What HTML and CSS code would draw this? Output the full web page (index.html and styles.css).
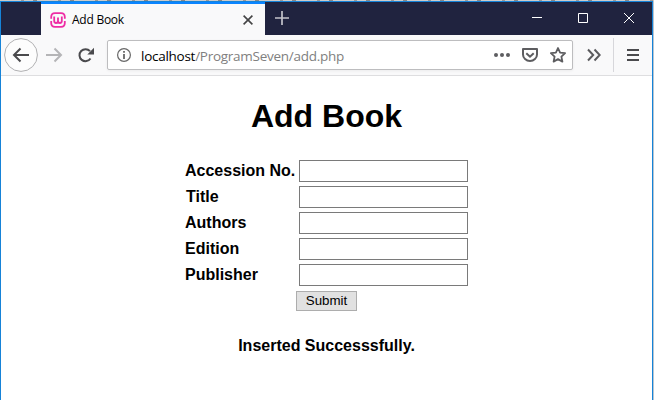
FILE: index.html
```html
<!DOCTYPE html>
<html lang="en">
<head>
<meta charset="utf-8">
<title>Add Book</title>
<link rel="stylesheet" href="styles.css">
</head>
<body>
<div class="desktop-edge"></div>
<div class="window">
  <header class="titlebar">
    <div class="tab">
      <svg class="favicon" width="16" height="16" viewBox="0 0 16 16" fill="none" stroke="#ee2ca4"><path stroke-width="1.8" d="M1.2 6.8V5Q1.2 1.2 5 1.2h6Q14.8 1.2 14.8 5v1.8M1.2 9V11Q1.2 14.8 5 14.8h6Q14.8 14.8 14.8 11V9"/><path stroke-width="1.8" d="M4.200 4.500v4.600Q4.200 11 6 11q2 0 2-2V5.500v3.500q0 2 2 2 1.800 0 1.800-1.900V4.500"/></svg>
      <span class="tab-title">Add Book</span>
      <svg class="tab-close" width="10" height="10" viewBox="0 0 10 10" fill="none" stroke="#444" stroke-width="1.6"><path d="M.6.6l8.800 8.800M9.400.6L.6 9.400"/></svg>
    </div>
    <svg class="new-tab" width="14" height="14" viewBox="0 0 14 14" fill="none" stroke="#c3c3cb" stroke-width="1.7"><path d="M7 0v14M0 7h14"/></svg>
    <svg class="controls" width="104" height="12" viewBox="0 0 104 12" fill="none" stroke="#fff"><path d="M0 6.5h10M46.500 2.500h9v9h-9zM92 2l10 10M102 2L92 12"/></svg>
  </header>
  <nav class="toolbar">
    <svg class="nav-icons" width="102" height="36" viewBox="0 0 102 36" fill="none">
      <circle cx="17" cy="18" r="16.400" fill="#fdfdfd" stroke="#b1b1b3"/>
      <path d="M25 18H10.200M16.500 11.500L10 18l6.500 6.500" stroke="#4a4a4d" stroke-width="2"/>
      <path d="M42 18h14.800M50.500 11.500L57 18l-6.500 6.500" stroke="#b5b5b7" stroke-width="2"/>
      <path d="M86.500 21.500A6 6 0 1 1 86 14.200" stroke="#4a4a4d" stroke-width="2"/>
      <path d="M90 10.800V17.500H83.300z" fill="#4a4a4d"/>
    </svg>
    <div class="urlbar">
      <svg width="14" height="14" viewBox="0 0 14 14" fill="none" stroke="#686868"><circle cx="7" cy="7" r="6.400" stroke-width="1.200"/><path stroke-width="1.800" d="M7 6v5M7 3v1.800"/></svg>
      <span class="address">localhost<span class="path">/ProgramSeven/add.php</span></span>
      <svg class="page-actions" width="72" height="18" viewBox="0 0 72 18" fill="none" stroke="#5d5d60" stroke-width="2">
        <g fill="#5d5d60" stroke="none"><circle cx="2" cy="9" r="2"/><circle cx="8" cy="9" r="2"/><circle cx="14" cy="9" r="2"/></g>
        <path stroke-linejoin="round" d="M29 3h14v5.500a7 6.500 0 0 1-14 0z"/><path d="M32.300 7.200L36 10.700l3.700-3.500"/>
        <path stroke-width="1.800" stroke-linejoin="round" d="M64 2l2.100 4.600 5 .6-3.700 3.400 1 5-4.400-2.500-4.400 2.500 1-5L56.900 7.200l5-.6z"/>
      </svg>
    </div>
    <svg class="overflow" width="14" height="14" viewBox="0 0 14 14" fill="none" stroke="#5a5a5d" stroke-width="2"><path d="M1 1.500L6.200 7 1 12.500M7.500 1.500L12.700 7l-5.200 5.500"/></svg>
    <div class="menu"><svg width="12" height="12" viewBox="0 0 12 12" stroke="#4a4a4d" stroke-width="2"><path d="M0 1h12M0 6h12M0 11h12"/></svg></div>
  </nav>
  <main class="page">
    <h1>Add Book</h1>
    <form class="book-form">
      <label for="acc">Accession No.</label><input id="acc" type="text">
      <label for="title" class="nudge">Title</label><input id="title" type="text">
      <label for="authors">Authors</label><input id="authors" type="text">
      <label for="edition">Edition</label><input id="edition" type="text">
      <label for="publisher">Publisher</label><input id="publisher" type="text">
    </form>
    <button class="submit" type="button">Submit</button>
    <p class="message">Inserted Successsfully.</p>
  </main>
</div>
</body>
</html>
```
FILE: styles.css
```css
* { box-sizing: border-box; }
body {
  margin: 0;
  width: 654px;
  height: 400px;
  overflow: hidden;
  background: #b9c6d0;
  font-family: "Liberation Sans", Arial, sans-serif;
  color: #000;
}
svg { display: block; flex: none; }
.desktop-edge {
  height: 1px;
  background: repeating-linear-gradient(90deg, #ccc 0 21px, #999 21px 24px, #ccc 24px 33px, #888 33px 37px);
}
.window {
  width: 653px;
  height: 399px;
  border: 1px solid #1683d8;
  border-bottom: 0;
  background: #fff;
}
.titlebar {
  display: flex;
  height: 33px;
  padding-left: 40px;
  background: #20233f;
}
.tab {
  display: flex;
  align-items: center;
  width: 224px;
  padding: 0 12px 0 9px;
  border-top: 2px solid #0a84ff;
  background: #f9f9fa;
}
.tab-title {
  flex: 1;
  margin-left: 6px;
  font: 12px/16px "Open Sans", sans-serif;
  letter-spacing: -0.25px;
}
.favicon { margin-top: 1px; }
.new-tab { margin: 9px 0 0 10px; }
.controls { margin: 9px 16px 0 auto; }
.toolbar {
  display: flex;
  align-items: center;
  height: 41px;
  padding: 0 0 1px 3px;
  border-bottom: 1px solid #dedee0;
  background: #f9f9fa;
}
.urlbar {
  display: flex;
  align-items: center;
  width: 466px;
  height: 30px;
  margin-left: 1px;
  padding: 0 6px 0 9px;
  border: 1px solid #bdbdbf;
  border-radius: 2px;
  background: #fff;
  box-shadow: 0 1px 3px rgba(0, 0, 0, .06);
}
.address {
  margin-left: 10px;
  padding-top: 2px;
  font: 13.5px/20px "Open Sans", sans-serif;
  letter-spacing: -0.27px;
  white-space: nowrap;
}
.path { color: #808080; }
.page-actions { margin-left: auto; }
.overflow { margin-left: 14px; }
.menu {
  display: flex;
  align-items: center;
  height: 34px;
  margin-left: 12px;
  padding-left: 13px;
  border-left: 1px solid #d7d7db;
}
.page {
  display: flex;
  flex-direction: column;
  align-items: center;
  padding-top: 22px;
}
h1 {
  margin: 0 0 25px;
  font-size: 32px;
  line-height: 37px;
}
.book-form {
  display: grid;
  grid-template-columns: 114px 169px;
  grid-auto-rows: 22px;
  row-gap: 4px;
  align-items: center;
  font-weight: bold;
  font-size: 16px;
  line-height: 18px;
}
.nudge { padding-left: 1px; }
.book-form input {
  width: 169px;
  height: 22px;
  margin: 0;
  padding: 1px 3px;
  border: 1px solid #7a7a7a;
  background: #fff;
}
.submit {
  width: 61px;
  height: 20px;
  margin: 5px 0 0;
  padding: 0 0 1px;
  border: 1px solid #adadad;
  border-radius: 0;
  background: #e1e1e1;
  color: #000;
  font: 13.333px/16px "Liberation Sans", Arial, sans-serif;
}
.message {
  margin: 26px 0 0;
  font-size: 16px;
  font-weight: bold;
  line-height: 18px;
}
```
